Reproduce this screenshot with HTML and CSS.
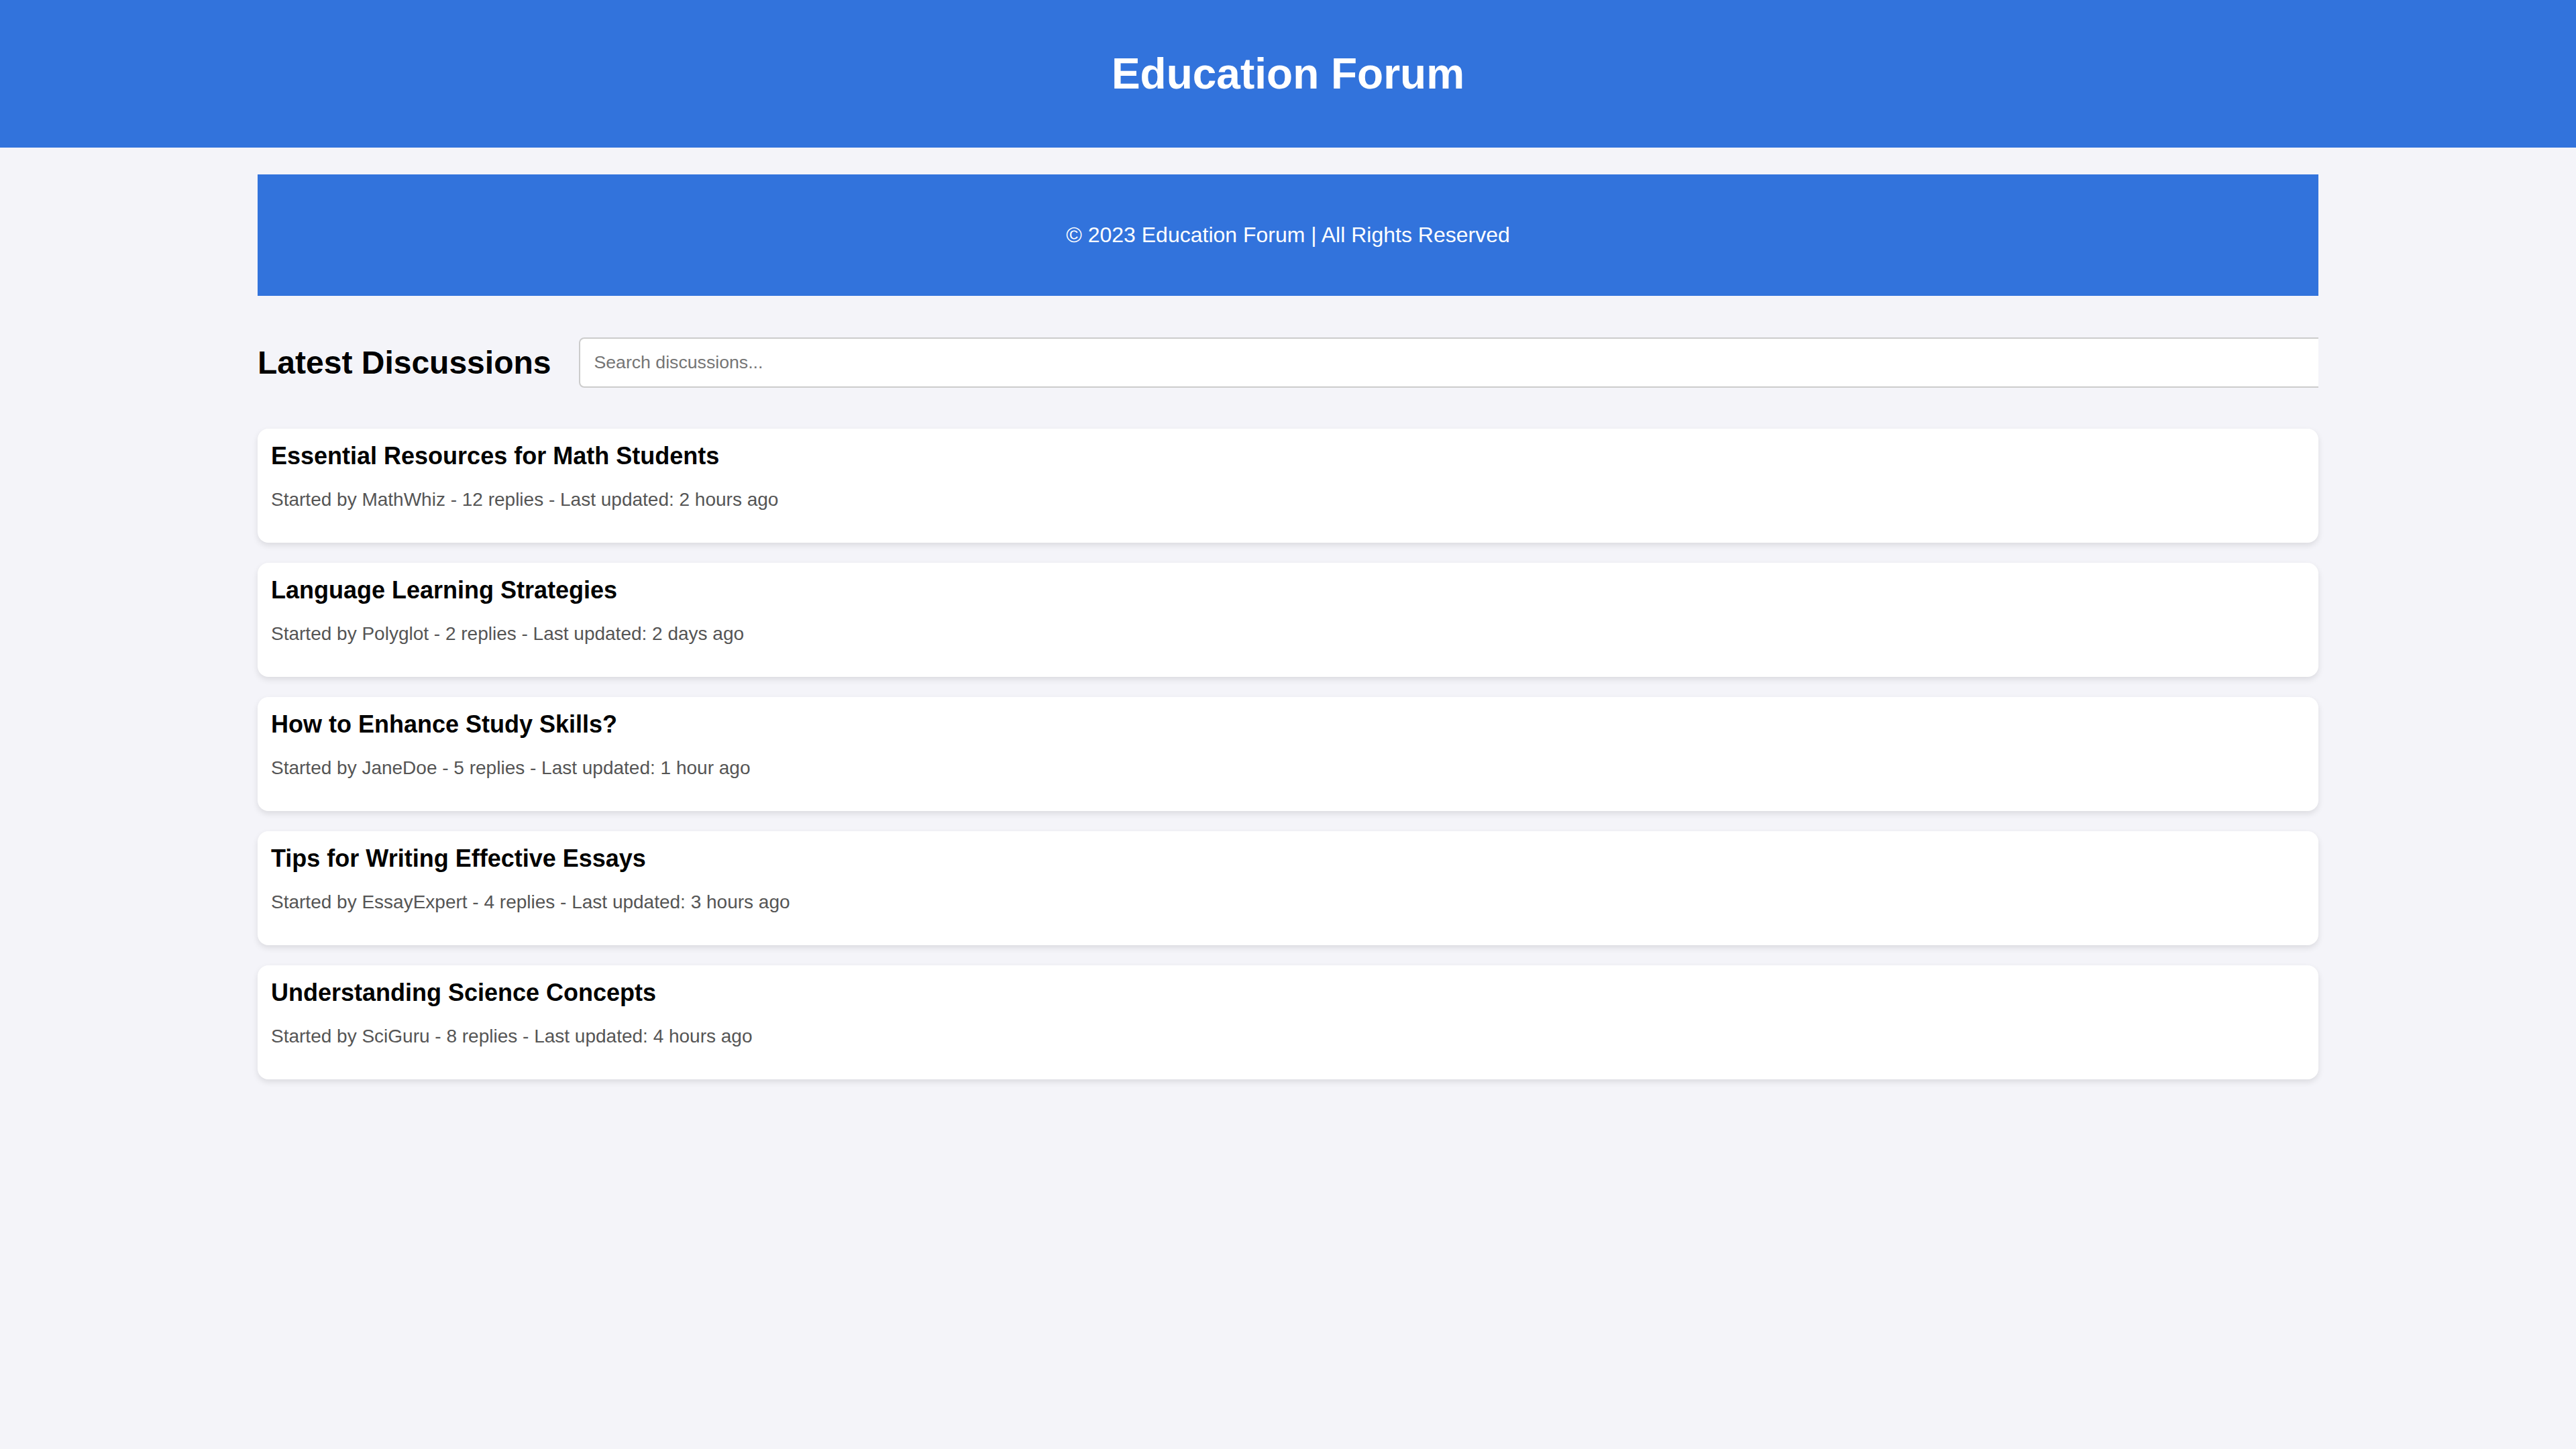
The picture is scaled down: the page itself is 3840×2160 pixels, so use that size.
FILE: index.html
```html
<!DOCTYPE html>
<html lang="en">
<head>
<meta charset="utf-8">
<title>Education Forum</title>
<link rel="stylesheet" href="styles.css">
</head>
<body>
<header class="site-header">
  <h1 class="site-title">Education Forum</h1>
</header>
<div class="container">
  <footer class="site-footer">
    <p class="footer-text">&copy; 2023 Education Forum | All Rights Reserved</p>
  </footer>
  <div class="search-row">
    <h2 class="section-title">Latest Discussions</h2>
    <input class="search-input" type="text" placeholder="Search discussions...">
  </div>
  <div class="thread-list">
    <div class="thread">
      <h3 class="thread-title">Essential Resources for Math Students</h3>
      <p class="thread-meta">Started by MathWhiz - 12 replies - Last updated: 2 hours ago</p>
    </div>
    <div class="thread">
      <h3 class="thread-title">Language Learning Strategies</h3>
      <p class="thread-meta">Started by Polyglot - 2 replies - Last updated: 2 days ago</p>
    </div>
    <div class="thread">
      <h3 class="thread-title">How to Enhance Study Skills?</h3>
      <p class="thread-meta">Started by JaneDoe - 5 replies - Last updated: 1 hour ago</p>
    </div>
    <div class="thread">
      <h3 class="thread-title">Tips for Writing Effective Essays</h3>
      <p class="thread-meta">Started by EssayExpert - 4 replies - Last updated: 3 hours ago</p>
    </div>
    <div class="thread">
      <h3 class="thread-title">Understanding Science Concepts</h3>
      <p class="thread-meta">Started by SciGuru - 8 replies - Last updated: 4 hours ago</p>
    </div>
  </div>
</div>
</body>
</html>
```
FILE: styles.css
```css
html, body {
  margin: 0;
  padding: 0;
}

body {
  font-family: "Liberation Sans", Arial, sans-serif;
  background: #f4f4f9;
  color: #000;
}

.site-header {
  background: #3273dc;
  color: #fff;
  text-align: center;
  padding: 30px;
}

.site-title {
  font-size: 64px;
  font-weight: bold;
  margin: 42.88px 0;
  line-height: normal;
}

.container {
  width: 80%;
  margin: 40px auto;
}

.site-footer {
  background: #3273dc;
  color: #fff;
  text-align: center;
  padding: 40px;
}

.footer-text {
  font-size: 32px;
  margin: 32px 0;
  line-height: normal;
}

.search-row {
  display: flex;
  align-items: center;
  margin-top: 32px;
  overflow: hidden;
}

.section-title {
  flex: none;
  font-size: 48px;
  font-weight: bold;
  margin: 39.84px 42px 39.84px 0;
  line-height: normal;
}

.search-input {
  flex: none;
  width: 100%;
  box-sizing: content-box;
  padding: 20px;
  border: 2px solid #ccc;
  border-radius: 8px;
  background: #fff;
  font-family: "Liberation Sans", Arial, sans-serif;
  font-size: 26.67px;
  line-height: normal;
  outline: none;
}

.search-input::placeholder {
  color: #757575;
}

.thread-list {
  margin-top: 32px;
}

.thread {
  background: #fff;
  padding: 20px;
  border-radius: 16px;
  box-shadow: 0 4px 10px rgba(0, 0, 0, 0.1);
  margin-bottom: 30px;
}

.thread-title {
  font-size: 36px;
  font-weight: bold;
  margin: 0;
  line-height: normal;
}

.thread-meta {
  font-size: 28px;
  color: #555;
  margin: 28px 0;
  line-height: normal;
}
```
